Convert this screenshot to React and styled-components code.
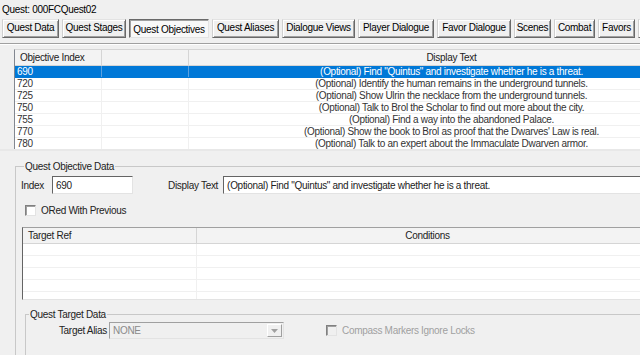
import React from 'react';
import styled, { createGlobalStyle } from 'styled-components';

const GlobalStyle = createGlobalStyle`
  html, body {
    margin: 0;
    padding: 0;
    background: #f0f0f0;
  }
  body {
    font-family: 'Liberation Sans', Arial, sans-serif;
    font-size: 10px;
    letter-spacing: -0.3px;
    color: #000;
  }
`;

const tabs = [
  { label: 'Quest Data', w: 57 },
  { label: 'Quest Stages', w: 64 },
  { label: 'Quest Objectives', w: 80, active: true },
  { label: 'Quest Aliases', w: 67 },
  { label: 'Dialogue Views', w: 73 },
  { label: 'Player Dialogue', w: 76 },
  { label: 'Favor Dialogue', w: 74 },
  { label: 'Scenes', w: 37 },
  { label: 'Combat', w: 41 },
  { label: 'Favors', w: 37 },
  { label: '', w: 40 },
];

const objectives = [
  ['690', '(Optional) Find "Quintus" and investigate whether he is a threat.'],
  ['720', '(Optional) Identify the human remains in the underground tunnels.'],
  ['725', '(Optional) Show Ulrin the necklace from the underground tunnels.'],
  ['750', '(Optional) Talk to Brol the Scholar to find out more about the city.'],
  ['755', '(Optional) Find a way into the abandoned Palace.'],
  ['770', "(Optional) Show the book to Brol as proof that the Dwarves' Law is real."],
  ['780', '(Optional) Talk to an expert about the Immaculate Dwarven armor.'],
];

const App = () => {
  return (
    <Window>
      <GlobalStyle />
      <Title>Quest: 000FCQuest02</Title>
      <TabBar>
        {tabs.map((t, i) => (
          <Tab key={i} $w={t.w} $active={t.active}>{t.label}</Tab>
        ))}
      </TabBar>
      <Divider />

      <ListView>
        <HeaderRow>
          <HeadCell $w={87} $align="left">Objective Index</HeadCell>
          <HeadCell $w={87} />
          <HeadCell $w={526}>Display Text</HeadCell>
        </HeaderRow>
        {objectives.map(([idx, text], i) => (
          <Row key={idx} $selected={i === 0}>
            <Cell $w={87} $selected={i === 0}>{idx}</Cell>
            <Cell $w={87} $selected={i === 0} />
            <Cell $w={526} $align="center" $selected={i === 0}>{text}</Cell>
          </Row>
        ))}
      </ListView>
      <Splitter />

      <Group>
        <Legend>Quest Objective Data</Legend>
        <FieldRow>
          <Label>Index</Label>
          <TextBox $w={81} defaultValue="690" />
          <Label $gap={35}>Display Text</Label>
          <TextBox $w={430} defaultValue={objectives[0][1]} />
        </FieldRow>

        <CheckRow>
          <CheckBox />
          <CheckLabel>ORed With Previous</CheckLabel>
        </CheckRow>

        <RefTable>
          <HeaderRow>
            <HeadCell $w={174} $align="left">Target Ref</HeadCell>
            <HeadCell $w={462}>Conditions</HeadCell>
          </HeaderRow>
          {[0, 1, 2, 3, 4].map(r => (
            <Row key={r}>
              <Cell $w={174} />
              <Cell $w={462} />
            </Row>
          ))}
        </RefTable>

        <SubGroup>
          <Legend>Quest Target Data</Legend>
          <TargetRow>
            <AliasLabel>Target Alias</AliasLabel>
            <Combo>
              <ComboText>NONE</ComboText>
              <ComboButton>
                <svg width="7" height="4" viewBox="0 0 7 4">
                  <path d="M0 0h7L3.5 4z" fill="#a0a0a0" />
                </svg>
              </ComboButton>
            </Combo>
            <CheckBox $disabled $gap={42} />
            <CheckLabel $disabled>Compass Markers Ignore Locks</CheckLabel>
          </TargetRow>
        </SubGroup>
      </Group>
    </Window>
  );
};

export default App;

const Window = styled.div`
  width: 640px;
  height: 355px;
  overflow: hidden;
  background: #f0f0f0;
`;

const Title = styled.div`
  padding: 3px 0 0 2px;
  height: 13px;
  line-height: 13px;
`;

const TabBar = styled.div`
  display: flex;
  gap: 3px;
  margin-top: 3px;
  padding-left: 2px;
`;

const Tab = styled.div`
  flex: 0 0 ${p => p.$w}px;
  box-sizing: border-box;
  height: 19px;
  line-height: ${p => (p.$active ? '17px' : '16px')};
  padding-top: ${p => (p.$active ? '1px' : '0')};
  text-align: center;
  white-space: nowrap;
  overflow: hidden;
  color: #000;
  background: ${p => (p.$active ? '#f8f8f8' : '#f0f0f0')};
  border: 1px solid;
  border-color: ${p =>
    p.$active ? '#696969 #e3e3e3 #e3e3e3 #696969' : '#e3e3e3 #696969 #696969 #d0d0d0'};
  box-shadow: ${p =>
    p.$active ? 'inset 1px 1px 0 #a0a0a0' : 'inset 1px 1px 0 #fff, inset -1px -1px 0 #a0a0a0'};
`;

const Divider = styled.div`
  margin-top: 5px;
  border-top: 1px solid #a0a0a0;
  border-bottom: 1px solid #fff;
`;

const ListView = styled.div`
  margin: 4px 0 0 14px;
  height: 99px;
  overflow: hidden;
  background: #fff;
  border-left: 1px solid #828790;
  border-top: 1px solid #d5d5d5;
  width: 720px;
`;

const Splitter = styled.div`
  height: 2px;
  background: #e8e8e8;
`;

const HeaderRow = styled.div`
  display: flex;
  height: 15px;
  background: #f3f3f3;
  border-bottom: 1px solid #d5d5d5;
`;

const HeadCell = styled.div`
  flex: 0 0 ${p => p.$w}px;
  box-sizing: border-box;
  padding: 0 5px;
  line-height: 15px;
  color: #222;
  text-align: ${p => p.$align || 'center'};
  border-right: 1px solid #d5d5d5;
  white-space: nowrap;
`;

const Row = styled.div`
  display: flex;
  height: 12px;
  background: ${p => (p.$selected ? '#0078d7' : '#fff')};
  border-bottom: 1px solid ${p => (p.$selected ? '#0078d7' : '#f0f0f0')};
  box-sizing: border-box;
`;

const Cell = styled.div`
  flex: 0 0 ${p => p.$w}px;
  box-sizing: border-box;
  padding: 0 2px;
  line-height: 11px;
  color: ${p => (p.$selected ? '#fff' : '#333')};
  text-align: ${p => p.$align || 'left'};
  border-right: 1px solid ${p => (p.$selected ? '#5aa0e0' : '#f0f0f0')};
  white-space: nowrap;
  overflow: hidden;
`;

const Group = styled.fieldset`
  margin: 9px 0 0 15px;
  padding: 0 0 20px 5px;
  min-width: 0;
  width: 700px;
  border: 1px solid #c8c8c8;
  border-right: none;
  border-bottom: none;
`;

const Legend = styled.legend`
  padding: 0 1px;
  margin-left: 3px;
  line-height: 13px;
  color: #222;
`;

const FieldRow = styled.div`
  display: flex;
  align-items: center;
  margin-top: 3px;
`;

const Label = styled.span`
  margin-left: ${p => p.$gap || 0}px;
  margin-right: ${p => (p.$gap ? 5 : 8)}px;
  color: #222;
`;

const TextBox = styled.input`
  box-sizing: border-box;
  width: ${p => p.$w}px;
  height: 18px;
  padding: 0 3px;
  font: inherit;
  letter-spacing: inherit;
  color: #222;
  background: #fff;
  border: 1px solid;
  border-color: #646464 #e3e3e3 #e3e3e3 #646464;
  outline: none;
`;

const CheckRow = styled.div`
  display: flex;
  align-items: center;
  margin: 10px 0 0 4px;
  height: 12px;
`;

const CheckBox = styled.span`
  display: inline-block;
  box-sizing: border-box;
  width: 11px;
  height: 11px;
  flex: 0 0 11px;
  margin-left: ${p => p.$gap || 0}px;
  background: ${p => (p.$disabled ? '#f0f0f0' : '#fff')};
  border: 1px solid;
  border-color: #808080 #e3e3e3 #e3e3e3 #808080;
  box-shadow: inset 1px 1px 0 #a0a0a0;
`;

const CheckLabel = styled.span`
  margin-left: 5px;
  color: ${p => (p.$disabled ? '#a0a0a0' : '#222')};
`;

const RefTable = styled.div`
  margin: 11px 0 0 1px;
  height: 71px;
  overflow: hidden;
  background: #fff;
  border-left: 1px solid #646464;
  border-top: 1px solid #a0a0a0;
  border-bottom: 1px solid #e3e3e3;
`;

const SubGroup = styled.fieldset`
  margin: 8px 0 0 4px;
  padding: 0 0 30px 0;
  min-width: 0;
  border: 1px solid #c8c8c8;
  border-right: none;
  border-bottom: none;
`;

const TargetRow = styled.div`
  display: flex;
  align-items: center;
  margin-top: 1px;
`;

const AliasLabel = styled.span`
  width: 50px;
  margin-left: 31px;
  margin-right: 2px;
  text-align: right;
  white-space: nowrap;
  color: #222;
`;

const Combo = styled.div`
  display: flex;
  align-items: center;
  box-sizing: border-box;
  width: 175px;
  height: 17px;
  background: #f0f0f0;
  border: 1px solid;
  border-color: #a0a0a0 #e3e3e3 #e3e3e3 #a0a0a0;
`;

const ComboText = styled.span`
  flex: 1;
  padding-left: 3px;
  color: #8a8a8a;
`;

const ComboButton = styled.span`
  display: flex;
  align-items: center;
  justify-content: center;
  box-sizing: border-box;
  width: 15px;
  height: 13px;
  margin-right: 1px;
  border: 1px solid;
  border-color: #fff #a0a0a0 #a0a0a0 #fff;
`;
